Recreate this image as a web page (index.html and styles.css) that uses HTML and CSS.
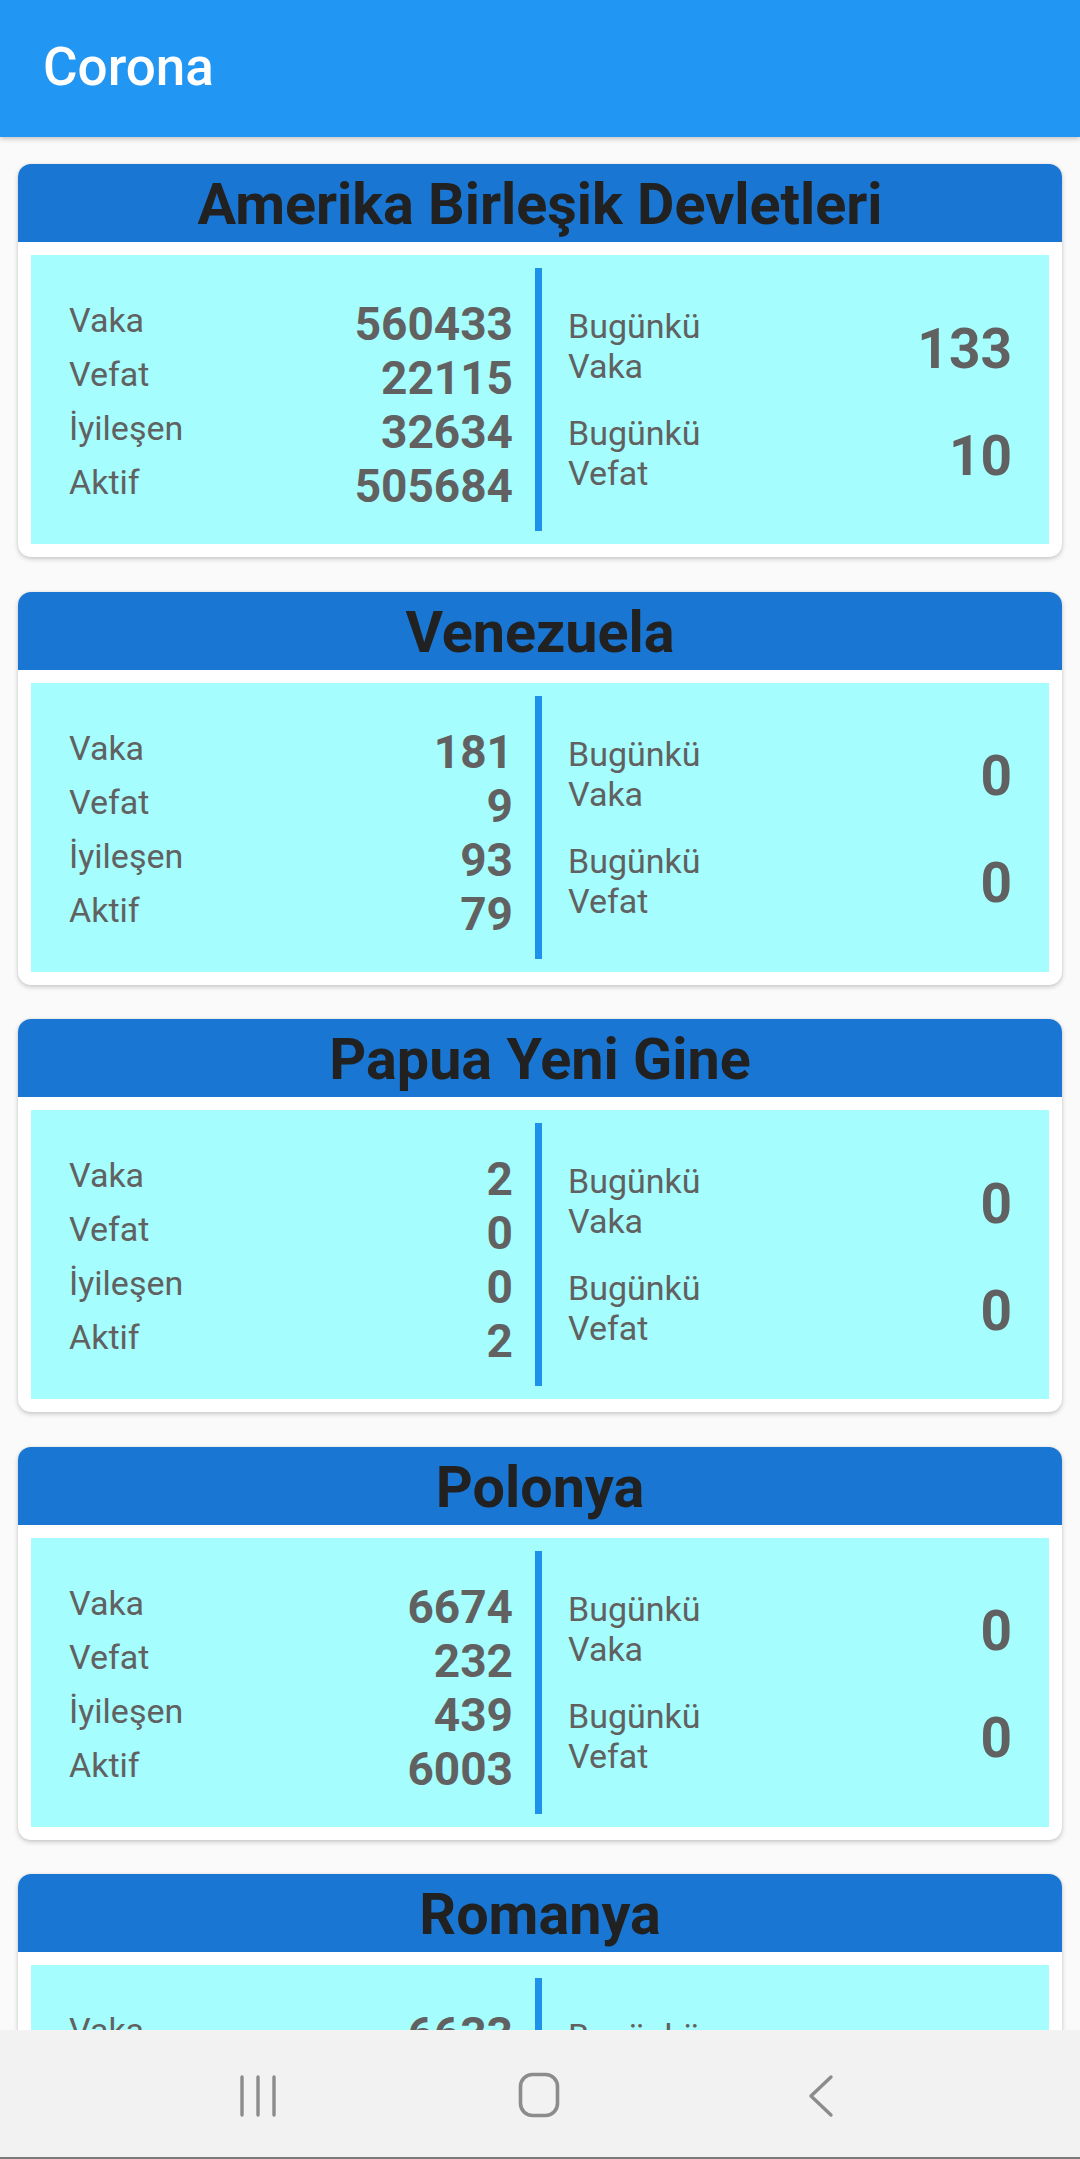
FILE: index.html
```html
<!DOCTYPE html>
<html lang="tr">
<head>
<meta charset="utf-8">
<title>Corona</title>
<link rel="stylesheet" href="styles.css">
</head>
<body>
<div class="screen">
  <header class="appbar"><span class="appbar-title">Corona</span></header>
  <main class="list">
    <section class="card">
      <h2 class="card-title">Amerika Birleşik Devletleri</h2>
      <div class="stats">
        <div class="totals">
          <div class="row"><span class="label">Vaka</span><span class="num">560433</span></div>
          <div class="row"><span class="label">Vefat</span><span class="num">22115</span></div>
          <div class="row"><span class="label">İyileşen</span><span class="num">32634</span></div>
          <div class="row"><span class="label">Aktif</span><span class="num">505684</span></div>
        </div>
        <div class="divider"></div>
        <div class="today">
          <div class="pair"><span class="tlabel">Bugünkü<br>Vaka</span><span class="bignum">133</span></div>
          <div class="pair"><span class="tlabel">Bugünkü<br>Vefat</span><span class="bignum">10</span></div>
        </div>
      </div>
    </section>
    <section class="card">
      <h2 class="card-title">Venezuela</h2>
      <div class="stats">
        <div class="totals">
          <div class="row"><span class="label">Vaka</span><span class="num">181</span></div>
          <div class="row"><span class="label">Vefat</span><span class="num">9</span></div>
          <div class="row"><span class="label">İyileşen</span><span class="num">93</span></div>
          <div class="row"><span class="label">Aktif</span><span class="num">79</span></div>
        </div>
        <div class="divider"></div>
        <div class="today">
          <div class="pair"><span class="tlabel">Bugünkü<br>Vaka</span><span class="bignum">0</span></div>
          <div class="pair"><span class="tlabel">Bugünkü<br>Vefat</span><span class="bignum">0</span></div>
        </div>
      </div>
    </section>
    <section class="card">
      <h2 class="card-title">Papua Yeni Gine</h2>
      <div class="stats">
        <div class="totals">
          <div class="row"><span class="label">Vaka</span><span class="num">2</span></div>
          <div class="row"><span class="label">Vefat</span><span class="num">0</span></div>
          <div class="row"><span class="label">İyileşen</span><span class="num">0</span></div>
          <div class="row"><span class="label">Aktif</span><span class="num">2</span></div>
        </div>
        <div class="divider"></div>
        <div class="today">
          <div class="pair"><span class="tlabel">Bugünkü<br>Vaka</span><span class="bignum">0</span></div>
          <div class="pair"><span class="tlabel">Bugünkü<br>Vefat</span><span class="bignum">0</span></div>
        </div>
      </div>
    </section>
    <section class="card">
      <h2 class="card-title">Polonya</h2>
      <div class="stats">
        <div class="totals">
          <div class="row"><span class="label">Vaka</span><span class="num">6674</span></div>
          <div class="row"><span class="label">Vefat</span><span class="num">232</span></div>
          <div class="row"><span class="label">İyileşen</span><span class="num">439</span></div>
          <div class="row"><span class="label">Aktif</span><span class="num">6003</span></div>
        </div>
        <div class="divider"></div>
        <div class="today">
          <div class="pair"><span class="tlabel">Bugünkü<br>Vaka</span><span class="bignum">0</span></div>
          <div class="pair"><span class="tlabel">Bugünkü<br>Vefat</span><span class="bignum">0</span></div>
        </div>
      </div>
    </section>
    <section class="card">
      <h2 class="card-title">Romanya</h2>
      <div class="stats">
        <div class="totals">
          <div class="row"><span class="label">Vaka</span><span class="num">6633</span></div>
          <div class="row"><span class="label">Vefat</span><span class="num">351</span></div>
          <div class="row"><span class="label">İyileşen</span><span class="num">1055</span></div>
          <div class="row"><span class="label">Aktif</span><span class="num">5227</span></div>
        </div>
        <div class="divider"></div>
        <div class="today">
          <div class="pair"><span class="tlabel">Bugünkü<br>Vaka</span><span class="bignum">0</span></div>
          <div class="pair"><span class="tlabel">Bugünkü<br>Vefat</span><span class="bignum">0</span></div>
        </div>
      </div>
    </section>
  </main>
  <nav class="navbar">
    <svg class="nav-icon" width="40" height="44" viewBox="0 0 40 44" aria-label="Son uygulamalar">
      <g stroke="#8c8c8c" stroke-width="3.4" stroke-linecap="round" fill="none">
        <line x1="4" y1="3" x2="4" y2="41"/>
        <line x1="20" y1="3" x2="20" y2="41"/>
        <line x1="36" y1="3" x2="36" y2="41"/>
      </g>
    </svg>
    <svg class="nav-icon" width="42" height="46" viewBox="0 0 42 46" aria-label="Ana ekran">
      <rect x="2.5" y="2.5" width="37" height="41" rx="12" ry="12" stroke="#8c8c8c" stroke-width="3.6" fill="none"/>
    </svg>
    <svg class="nav-icon" width="28" height="44" viewBox="0 0 28 44" aria-label="Geri">
      <polyline points="24,3 4,22 24,41" stroke="#8c8c8c" stroke-width="3.4" stroke-linecap="round" stroke-linejoin="round" fill="none"/>
    </svg>
  </nav>
</div>
</body>
</html>
```
FILE: styles.css
```css
* { box-sizing: border-box; }

html, body {
  margin: 0;
  padding: 0;
}

body {
  font-family: Roboto, "Noto Sans", "Liberation Sans", sans-serif;
  background: #fafafa;
}

.screen {
  width: 1080px;
  height: 2159px;
  display: flex;
  flex-direction: column;
  overflow: hidden;
}

.appbar {
  flex: 0 0 137px;
  background: #2196f3;
  display: flex;
  align-items: center;
  padding: 0 0 4px 43px;
  box-shadow: 0 2px 5px rgba(0, 0, 0, 0.22);
  position: relative;
  z-index: 2;
}

.appbar-title {
  color: #ffffff;
  font-size: 53px;
  font-weight: 500;
  line-height: normal;
}

.list {
  flex: 1 1 auto;
  overflow: hidden;
  padding: 27px 18px 0;
  display: flex;
  flex-direction: column;
  gap: 34.5px;
}

.card {
  flex: 0 0 auto;
  height: 393px;
  background: #ffffff;
  border-radius: 13px;
  overflow: hidden;
  box-shadow: 0 2px 5px rgba(0, 0, 0, 0.2), 0 0 2px rgba(0, 0, 0, 0.08);
  display: flex;
  flex-direction: column;
}

.card-title {
  margin: 0;
  height: 78px;
  background: #1976d2;
  color: #212121;
  font-size: 57.5px;
  font-weight: 700;
  text-align: center;
  line-height: normal;
  padding-top: 7px;
  white-space: nowrap;
}

.stats {
  margin: 13px 13px 0;
  height: 289px;
  background: #a5fdfd;
  display: flex;
}

.totals {
  flex: 1 1 0;
  display: flex;
  flex-direction: column;
  justify-content: center;
  padding: 11px 22px 0 38px;
}

.row {
  display: flex;
  justify-content: space-between;
  align-items: flex-start;
}

.label {
  color: #616161;
  font-size: 34px;
  line-height: normal;
  padding-top: 3px;
}

.num {
  color: #616161;
  font-size: 46px;
  font-weight: 700;
  line-height: normal;
}

.divider {
  flex: 0 0 7px;
  margin: 13px 0;
  background: #1e91ea;
}

.today {
  flex: 1 1 0;
  display: flex;
  flex-direction: column;
  justify-content: center;
  gap: 27px;
  padding: 0 37px 0 26px;
}

.pair {
  display: flex;
  justify-content: space-between;
  align-items: center;
}

.tlabel {
  color: #616161;
  font-size: 34px;
  line-height: 40px;
}

.bignum {
  color: #616161;
  font-size: 55px;
  font-weight: 700;
  line-height: normal;
  padding-top: 5px;
}

.navbar {
  flex: 0 0 129px;
  background: #f2f2f2;
  border-bottom: 2px solid #7a7a7a;
  display: flex;
  align-items: center;
  position: relative;
  z-index: 2;
}

.nav-icon {
  display: block;
  position: absolute;
  top: 44px;
}

.nav-icon:nth-child(1) { left: 238px; }
.nav-icon:nth-child(2) { left: 518px; top: 42px; }
.nav-icon:nth-child(3) { left: 807px; }
```
